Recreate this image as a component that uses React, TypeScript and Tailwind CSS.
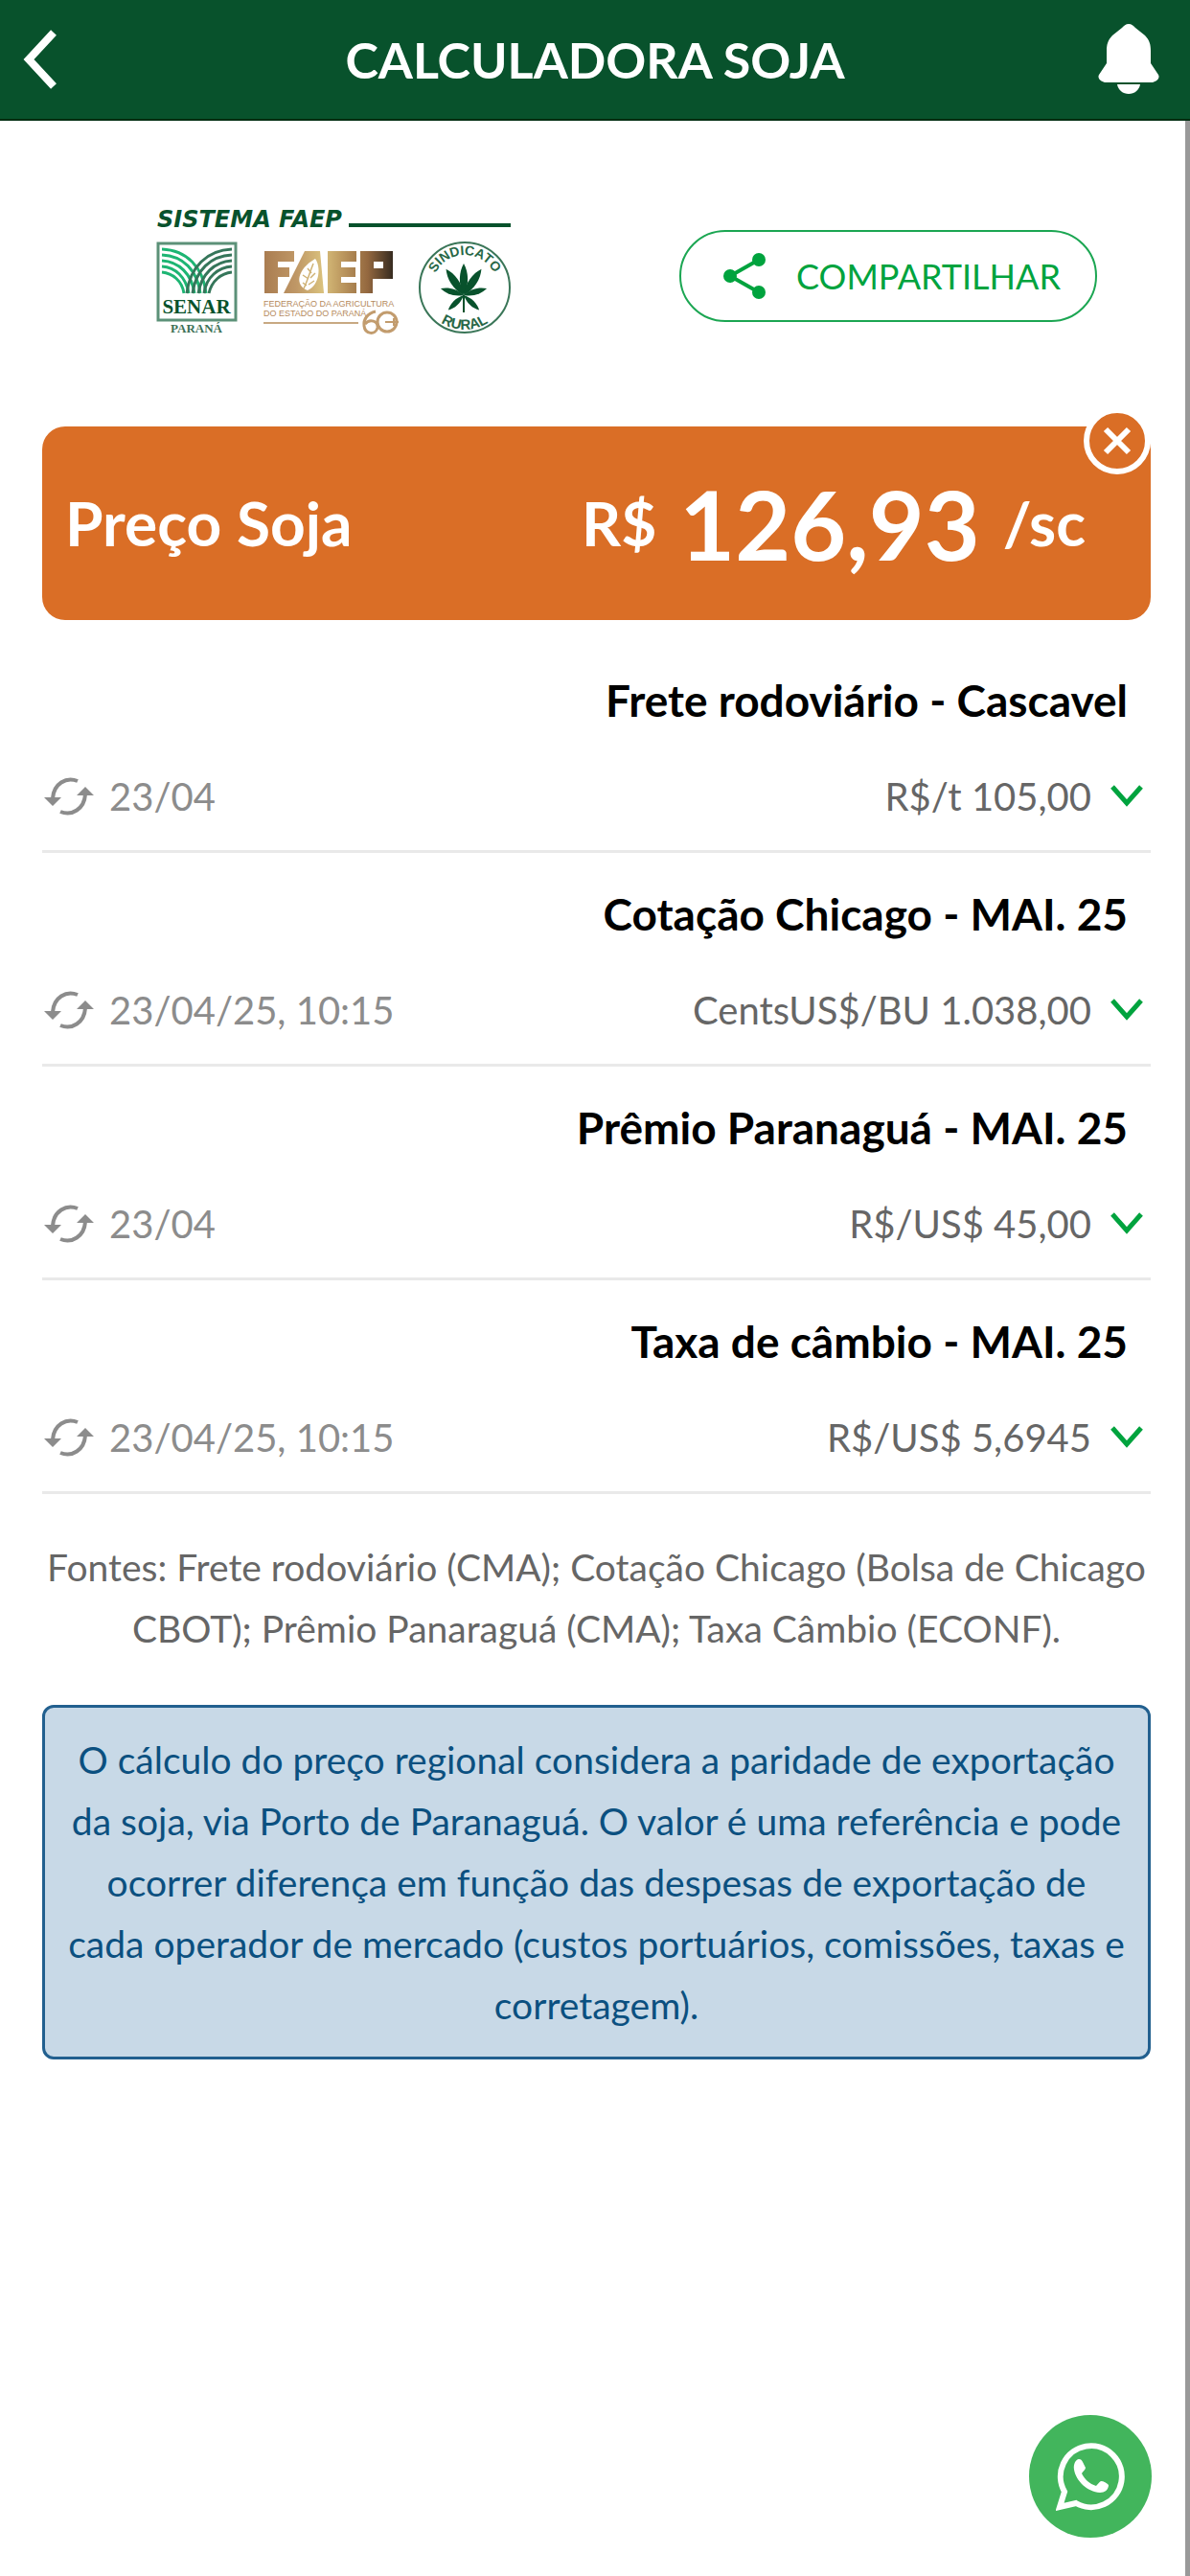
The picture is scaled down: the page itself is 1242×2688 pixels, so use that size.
import React from 'react';

interface Quote {
    id: string;
    title: string;
    updatedAt: string;
    value: string;
}

const quotes: Quote[] = [
    { id: 'frete', title: 'Frete rodoviário - Cascavel', updatedAt: '23/04', value: 'R$/t 105,00' },
    { id: 'chicago', title: 'Cotação Chicago - MAI. 25', updatedAt: '23/04/25, 10:15', value: 'CentsUS$/BU 1.038,00' },
    { id: 'premio', title: 'Prêmio Paranaguá - MAI. 25', updatedAt: '23/04', value: 'R$/US$ 45,00' },
    { id: 'cambio', title: 'Taxa de câmbio - MAI. 25', updatedAt: '23/04/25, 10:15', value: 'R$/US$ 5,6945' },
];

const BackIcon = () => (
    <svg width="36" height="62" viewBox="0 0 36 62" fill="none" stroke="currentColor" strokeWidth="8">
        <path d="M32 3 L6 31 L32 59" />
    </svg>
);

const BellIcon = () => (
    <svg width="64" height="74" viewBox="0 0 64 74" fill="currentColor">
        <path d="M32 0 C35 0 37 2 39 4 L49 12 C54 17 55 22 55 28 V41 L63 53 C65 57 61 60 57 61 H7 C3 60 -1 57 1 53 L9 41 V28 C9 22 10 17 15 12 L25 4 C27 2 29 0 32 0 Z" />
        <path d="M20 63 H44 C43 69 38 73 32 73 C26 73 21 69 20 63 Z" />
    </svg>
);

const ShareIcon = () => (
    <svg width="44" height="48" viewBox="0 0 44 48" fill="currentColor">
        <path d="M37 7 L7 24 L37 41" fill="none" stroke="currentColor" strokeWidth="4" />
        <circle cx="37" cy="7" r="7" />
        <circle cx="7" cy="24" r="7" />
        <circle cx="37" cy="41" r="7" />
    </svg>
);

const RefreshIcon = () => (
    <svg width="52" height="40" viewBox="0 0 52 40" fill="none" stroke="currentColor" strokeWidth="4">
        <path d="M35 4 C23 -1 10 7 9 22" />
        <path d="M17 36 C29 41 42 33 43 18" />
        <path d="M0 21 H18 L9 30 Z M34 19 H52 L43 10 Z" fill="currentColor" stroke="none" />
    </svg>
);

const ChevronIcon = () => (
    <svg width="34" height="26" viewBox="0 0 34 26" fill="none" stroke="#00a33e" strokeWidth="5">
        <path d="M2 3 L17 20 L32 3" />
    </svg>
);

const WhatsAppIcon = () => (
    <svg width="72" height="72" viewBox="0 0 72 72" fill="none">
        <path d="M4 68 L9 52 A32 32 0 1 1 21 64 Z" stroke="#fff" strokeWidth="6" strokeLinejoin="miter" />
        <path
            d="M24 18 C26 18 27 19 28 21 L31 27 C31 29 28 31 27 33 C30 39 35 44 42 46 C44 44 45 42 47 41 C50 41 53 43 55 45 C55 50 51 53 46 53 C33 52 21 41 19 29 C18 23 21 18 24 18 Z"
            fill="#fff"
        />
    </svg>
);

const leaves = [
    { angle: 0, scale: 1 },
    { angle: -34, scale: 1 },
    { angle: 34, scale: 1 },
    { angle: -74, scale: 0.76 },
    { angle: 74, scale: 0.76 },
    { angle: -134, scale: 0.68 },
    { angle: 134, scale: 0.68 },
];

const Logo = () => (
    <svg width="376" height="146" viewBox="0 -10 376 146" role="img" aria-label="Sistema FAEP">
        <defs>
            <linearGradient id="gold" gradientUnits="userSpaceOnUse" x1="112" y1="0" x2="248" y2="0">
                <stop offset="0" stopColor="#a97c50" />
                <stop offset="0.25" stopColor="#bf9766" />
                <stop offset="0.45" stopColor="#d9c07c" />
                <stop offset="0.6" stopColor="#bd9960" />
                <stop offset="0.8" stopColor="#94683f" />
                <stop offset="1" stopColor="#33291f" />
            </linearGradient>
            <path id="arc-top" d="M289 84 A34 34 0 0 1 357 84" />
            <path id="arc-bottom" d="M279 84 A44 44 0 0 0 367 84" />
        </defs>
        <text x="2" y="21" fill="#08522c" fontSize="24" fontWeight="700" fontStyle="italic" fontFamily="'DejaVu Sans', sans-serif">SISTEMA FAEP</text>
        <path d="M202 19 H371" stroke="#08522c" strokeWidth="4" />

        {/* Senar */}
        <rect x="3" y="38" width="81" height="80" fill="none" stroke="#5c9178" strokeWidth="3" />
        <g fill="none" strokeWidth="3" transform="translate(1 2)">
            <g stroke="#1db573">
                <path d="M6 42 C32 43 49 61 52 88" />
                <path d="M6 48 C28 49 43 64 46 88" />
                <path d="M6 54 C24 55 37 68 40 88" />
                <path d="M6 60 C20 61 31 71 34 88" />
                <path d="M6 66 C17 67 27 75 29 88" />
            </g>
            <g stroke="#35765a">
                <path d="M79 42 C53 43 35 61 32 88" />
                <path d="M79 48 C57 49 41 64 38 88" />
                <path d="M79 54 C61 55 47 68 44 88" />
                <path d="M79 60 C65 61 52 71 50 88" />
                <path d="M79 66 C68 67 58 75 55 88" />
            </g>
        </g>
        <text x="43" y="111" textAnchor="middle" fill="#08522c" fontSize="21" fontWeight="700" fontFamily="'Liberation Serif', serif">SENAR</text>
        <text x="43" y="131" textAnchor="middle" fill="#3d7157" fontSize="13" fontWeight="700" fontFamily="'Liberation Serif', serif">PARANÁ</text>

        {/* Faep wordmark: block shapes with an ear of grain in the second one */}
        <g transform="translate(1 2)">
            <g fill="url(#gold)">
                <path d="M113 44 H144 V55 H127 V61 H139 V71 H127 V88 H113 Z" />
                <path d="M155 44 H171 L175 88 H133 Z" />
                <path d="M179 44 H209 V55 H193 V61 H208 V71 H193 V77 H209 V88 H179 Z" />
                <path d="M213 44 H247 V73 H226 V88 H213 Z" />
            </g>
            <path d="M227 55 H237 V62 H227 Z" fill="#fff" />
            <path d="M166 52 C172 60 171 79 158 85 C144 80 147 63 166 52 Z" fill="#fff" />
            <path d="M154 83 C158 75 160 67 164 57 M153 69 L159 73 M158 62 L162 67 M153 77 L157 80 M166 67 L161 72 M165 75 L159 79" fill="none" stroke="#cfb275" strokeWidth="1.5" />
        </g>
        <text x="113" y="104" fill="#b58a5c" fontSize="9" fontFamily="'Liberation Sans', sans-serif">FEDERAÇÃO DA AGRICULTURA</text>
        <text x="113" y="114" fill="#b58a5c" fontSize="9" fontFamily="'Liberation Sans', sans-serif">DO ESTADO DO PARANÁ</text>
        <path d="M113 121 H212" stroke="#c8a982" strokeWidth="2" />
        <g fill="none" stroke="#c29c6e" strokeWidth="3" transform="translate(2 2)">
            <path d="M228 107 C219 109 215 116 216 122 C217 131 228 132 230 124 C231 117 222 114 217 120" />
            <circle cx="240" cy="118" r="10" />
            <path d="M238 118 H252 M247 114 V122" strokeWidth="2" />
        </g>

        {/* Sindicato Rural */}
        <circle cx="323" cy="84" r="47" fill="none" stroke="#3a7658" strokeWidth="2" />
        <text fill="#276746" fontSize="14" fontWeight="700" fontFamily="'Liberation Sans', sans-serif">
            <textPath href="#arc-top" startOffset="50%" textAnchor="middle">SINDICATO</textPath>
        </text>
        <text fill="#276746" fontSize="15" fontWeight="700" fontFamily="'Liberation Sans', sans-serif">
            <textPath href="#arc-bottom" startOffset="50%" textAnchor="middle">RURAL</textPath>
        </text>
        <g fill="#08522c" transform="translate(322 92)">
            {leaves.map(({ angle, scale }) => (
                <path key={angle} d="M0 0 C-6 -12 -5 -24 0 -33 C5 -24 6 -12 0 0 Z" transform={`rotate(${angle}) scale(${scale})`} />
            ))}
            <path d="M-1 0 H1 V18 H-1 Z" />
        </g>
    </svg>
);

const QuoteRow: React.FC<{ quote: Quote }> = ({ quote }) => (
    <li className="border-b-3 border-[#e9e9e9] pt-9 pb-7">
        <h2 className="pr-6 text-right text-[46px] leading-14 font-bold text-black">{quote.title}</h2>
        <div className="mt-11 flex items-center justify-between pr-2 pl-0.5">
            <span className="flex items-center gap-4 text-[#8c8c8c]">
                <RefreshIcon />
                <time className="text-[40px] leading-14">{quote.updatedAt}</time>
            </span>
            <button type="button" className="flex items-center gap-5 text-[40px] leading-14 text-[#666]">
                {quote.value}
                <ChevronIcon />
            </button>
        </div>
    </li>
);

export default function App() {
    return (
        <div className="flex min-h-screen flex-col border-r-5 border-[#999] bg-white font-['Lato','Open_Sans',sans-serif]">
            <header className="-mr-[5px] flex h-[126px] items-center border-b-2 border-[#002c10] bg-[#08522c] pr-8 pl-6 text-white">
                <button type="button" aria-label="Voltar" className="w-18">
                    <BackIcon />
                </button>
                <h1 className="flex-1 text-center text-[52px] font-bold">CALCULADORA SOJA</h1>
                <button type="button" aria-label="Notificações" className="w-16">
                    <BellIcon />
                </button>
            </header>

            <main className="pr-9 pl-11">
                <div className="flex items-start justify-between pt-20 pr-14 pl-[118px]">
                    <Logo />
                    <button
                        type="button"
                        className="mt-[34px] flex h-24 items-center gap-8 rounded-full border-2 border-[#1ba652] px-11 pr-9 text-[36px] text-[#00a33e]"
                    >
                        <ShareIcon />
                        COMPARTILHAR
                    </button>
                </div>

                <section className="relative mt-[93px] flex h-[202px] items-center justify-between rounded-3xl bg-[#da6e26] pr-17 pl-6 text-white">
                    <h2 className="text-[64px] font-bold">Preço Soja</h2>
                    <p className="flex items-center gap-6 text-[64px] font-bold">
                        R$
                        <strong className="text-[100px] leading-none font-bold">126,93</strong>
                        /sc
                    </p>
                    <button
                        type="button"
                        aria-label="Fechar"
                        className="absolute -top-5 right-0 flex size-[70px] items-center justify-center rounded-full border-6 border-white bg-[#da6e26]"
                    >
                        <svg width="30" height="30" viewBox="0 0 30 30" stroke="#fff" strokeWidth="6">
                            <path d="M3 3 L27 27 M27 3 L3 27" />
                        </svg>
                    </button>
                </section>

                <ul className="mt-5">
                    {quotes.map((quote) => (
                        <QuoteRow key={quote.id} quote={quote} />
                    ))}
                </ul>

                <p className="mt-11 text-center text-[39px] leading-16 text-[#666]">
                    Fontes: Frete rodoviário (CMA); Cotação Chicago (Bolsa de Chicago CBOT); Prêmio Panaraguá (CMA); Taxa Câmbio (ECONF).
                </p>

                <p className="mt-12 rounded-xl border-3 border-[#22608f] bg-[#c8d9e7] px-6 py-[22px] text-center text-[39px] leading-16 text-[#0b5080]">
                    O cálculo do preço regional considera a paridade de exportação da soja, via Porto de Paranaguá. O valor é uma referência e pode ocorrer diferença em função das despesas de exportação de cada operador de mercado (custos portuários, comissões, taxas e corretagem).
                </p>
            </main>

            <a
                href="#whatsapp"
                aria-label="WhatsApp"
                className="fixed right-10 bottom-10 flex size-32 items-center justify-center rounded-full bg-[#42b55c]"
            >
                <WhatsAppIcon />
            </a>
        </div>
    );
}
